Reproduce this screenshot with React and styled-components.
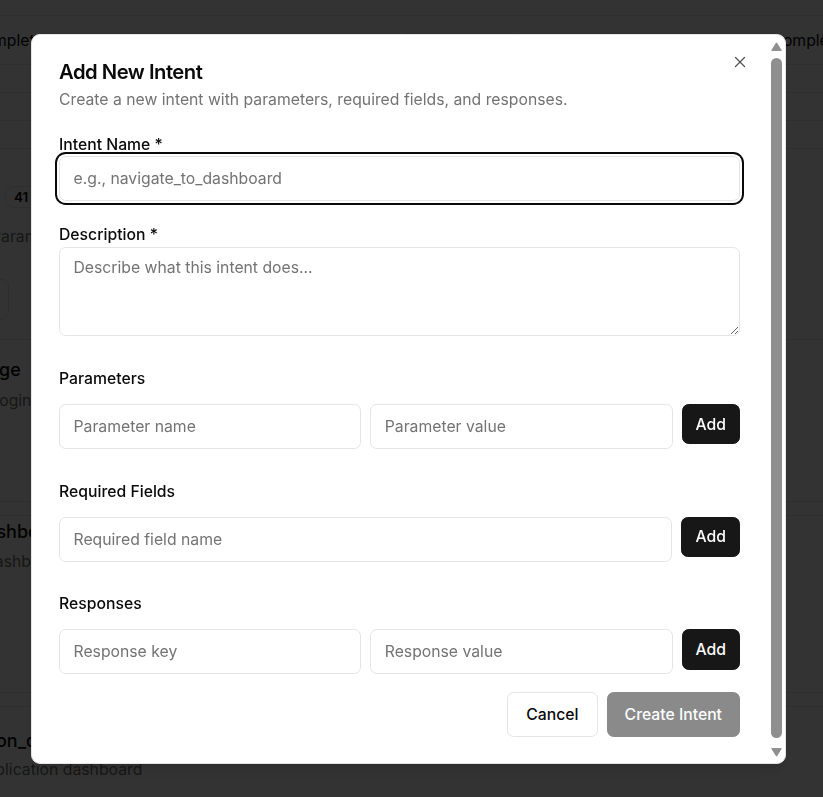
import React from "react";
import styled, { createGlobalStyle } from "styled-components";
import { X } from "lucide-react";

const Global = createGlobalStyle`
  *, *::before, *::after { box-sizing: border-box; }
  html, body { margin: 0; padding: 0; background: #fff; }
  body {
    font-family: Inter, "Noto Sans", sans-serif;
    color: #0a0a0a;
    overflow: hidden;
  }
`;

/* ---------- background page ---------- */
const Page = styled.div`
  width: 823px;
  height: 797px;
  overflow: hidden;
  background: #fff;
`;

const TopStrip = styled.div`
  height: 16px;
  border-bottom: 1px solid #e5e5e5;
`;

const HeadRow = styled.div`
  height: 49px;
  border-bottom: 1px solid #e5e5e5;
  display: flex;
  align-items: center;
  justify-content: space-between;
  margin: 0 -20px 0 -28px;
  font-size: 15.75px;
  white-space: nowrap;
  padding-top: 1px;
`;

const HeadMid = styled.span`
  color: #0a0a0a;
  letter-spacing: 6px;
`;

const ThinRow = styled.div`
  height: 28px;
  border-bottom: 1px solid #e5e5e5;
`;

const Summary = styled.div`
  height: 191px;
  border-bottom: 1px solid #e5e5e5;
  padding-top: 37px;
  display: flex;
  flex-direction: column;
  align-items: flex-start;
`;

const Pill = styled.span`
  margin-left: 4px;
  height: 22px;
  padding: 0 9px;
  border: 1px solid #e5e5e5;
  border-radius: 999px;
  font-size: 13.5px;
  font-weight: 600;
  line-height: 20px;
  white-space: nowrap;
`;

const MutedLine = styled.div`
  margin-top: 18px;
  margin-left: -9px;
  font-size: 15.75px;
  line-height: 22.5px;
  color: #737373;
  white-space: nowrap;
`;

const GhostBox = styled.div`
  margin-top: 30px;
  margin-left: -60px;
  width: 69px;
  height: 40px;
  border: 1px solid #e5e5e5;
  border-radius: 7px;
`;

const Item = styled.div`
  height: ${(p) => p.$h}px;
  padding-top: ${(p) => p.$pt}px;
  border-bottom: 1px solid #e5e5e5;
  margin-left: ${(p) => p.$shift}px;
  white-space: nowrap;
`;

const Spacer = styled.div`
  height: 14px;
  border-bottom: 1px solid #e5e5e5;
`;

const ItemTitle = styled.div`
  font-size: 18px;
  font-weight: 500;
  line-height: 27px;
`;

const ItemDesc = styled.div`
  margin-top: ${(p) => p.$mt}px;
  margin-left: ${(p) => p.$dx || 0}px;
  font-size: 15.75px;
  line-height: 22.5px;
  color: #737373;
`;

/* ---------- dialog ---------- */
const Overlay = styled.div`
  position: fixed;
  inset: 0;
  background: rgba(0, 0, 0, 0.8);
  display: flex;
  align-items: center;
  justify-content: center;
  padding-right: 6px;
`;

const Modal = styled.div`
  position: relative;
  width: 755px;
  height: 730px;
  background: #fff;
  border: 1px solid #e5e5e5;
  border-radius: 9px;
  box-shadow: 0 10px 15px -3px rgba(0, 0, 0, 0.1), 0 4px 6px -4px rgba(0, 0, 0, 0.1);
  overflow: hidden;
  display: flex;
`;

const Body = styled.div`
  flex: 1;
  min-width: 0;
  padding: 27px 30px 27px 27px;
`;

const Rail = styled.div`
  width: 15px;
  flex-shrink: 0;
  display: flex;
  flex-direction: column;
  padding: 7px 0 0 1px;
`;

const Arrow = styled.svg`
  display: block;
  width: 11px;
  height: 9px;
  margin-top: ${(p) => p.$mt}px;
  fill: #8f8f8f;
  stroke: #8f8f8f;
`;

const Thumb = styled.div`
  margin-top: 7px;
  width: 11px;
  height: 680px;
  border-radius: 6px;
  background: #8f8f8f;
`;

const CloseBtn = styled.button`
  position: absolute;
  top: 18px;
  right: 36px;
  width: 18px;
  height: 18px;
  padding: 0;
  border: 0;
  background: transparent;
  color: #0a0a0a;
  opacity: 0.7;
  display: flex;
  align-items: center;
  justify-content: center;
  cursor: pointer;
`;

const Title = styled.h2`
  margin: 0;
  font-size: 20.25px;
  font-weight: 600;
  line-height: 1;
  letter-spacing: -0.025em;
`;

const Subtitle = styled.p`
  margin: 6.75px 0 0;
  font-size: 15.75px;
  line-height: 22.5px;
  color: #737373;
`;

const Form = styled.form`
  margin-top: 26px;
`;

const Group = styled.div`
  margin-top: ${(p) => p.$mt || 0}px;
`;

const Label = styled.label`
  display: block;
  font-size: 15.75px;
  font-weight: 500;
  line-height: 16px;
  margin-bottom: ${(p) => p.$mb}px;
`;

const fieldBase = `
  display: block;
  width: 100%;
  border: 1px solid #e5e5e5;
  border-radius: 6.75px;
  background: #fff;
  font-family: Inter, "Noto Sans", sans-serif;
  font-size: 15.75px;
  color: #0a0a0a;
  outline: none;
  &::placeholder { color: #737373; opacity: 1; }
`;

const Input = styled.input`
  ${fieldBase}
  height: 45px;
  padding: 0 13.5px;
  flex: 1;
  min-width: 0;
  box-shadow: ${(p) => (p.$focused ? "0 0 0 2px #fff, 0 0 0 4px #0a0a0a" : "none")};
`;

const TextArea = styled.textarea`
  ${fieldBase}
  height: 89px;
  padding: 9px 13.5px;
  line-height: 22.5px;
`;

const Row = styled.div`
  display: flex;
  gap: 9px;
  align-items: flex-start;
`;

const Button = styled.button`
  flex-shrink: 0;
  height: ${(p) => (p.$tall ? 45 : 40.5)}px;
  padding: 0 ${(p) => p.$px}px;
  border-radius: 6.75px;
  font-family: Inter, "Noto Sans", sans-serif;
  font-size: 15.75px;
  font-weight: 500;
  border: 1px solid ${(p) => (p.$outline ? "#e5e5e5" : "#171717")};
  background: ${(p) => (p.$outline ? "#fff" : "#171717")};
  color: ${(p) => (p.$outline ? "#0a0a0a" : "#fafafa")};
  opacity: ${(p) => (p.disabled ? 0.5 : 1)};
  cursor: pointer;
`;

const Footer = styled.div`
  margin-top: 18px;
  display: flex;
  justify-content: flex-end;
  gap: 9px;
`;

function ScrollRail() {
  return (
    <Rail aria-hidden="true">
      <Arrow $mt={0} viewBox="0 0 11 9">
        <polygon points="5.5,0.8 10.3,8.4 0.7,8.4" strokeWidth="1" strokeLinejoin="round" />
      </Arrow>
      <Thumb />
      <Arrow $mt={10} viewBox="0 0 11 9">
        <polygon points="0.7,0.6 10.3,0.6 5.5,8.2" strokeWidth="1" strokeLinejoin="round" />
      </Arrow>
    </Rail>
  );
}

export default function App() {
  return (
    <>
      <Global />
      <Page>
        <TopStrip />
        <HeadRow>
          <span>Complete</span>
          <HeadMid>completed intents list</HeadMid>
          <span>Complete</span>
        </HeadRow>
        <ThinRow />
        <ThinRow />
        <ThinRow />
        <Summary>
          <Pill>41 intents</Pill>
          <MutedLine>Parameters</MutedLine>
          <GhostBox />
        </Summary>
        <Item $h={162} $pt={16} $shift={-181}>
          <ItemTitle>navigate_to_login_page</ItemTitle>
          <ItemDesc $mt={7} $dx={22}>Navigate to the user login page</ItemDesc>
        </Item>
        <Spacer />
        <Item $h={177} $pt={2} $shift={-132}>
          <ItemTitle>navigate_to_dashboard</ItemTitle>
          <ItemDesc $mt={6}>Navigate to the dashboard</ItemDesc>
        </Item>
        <Spacer />
        <Item $h={100} $pt={20} $shift={-143}>
          <ItemTitle>launch_application_dashboard</ItemTitle>
          <ItemDesc $mt={5} $dx={7}>Open the main application dashboard</ItemDesc>
        </Item>
      </Page>

      <Overlay>
        <Modal role="dialog">
          <Body>
            <Title>Add New Intent</Title>
            <Subtitle>Create a new intent with parameters, required fields, and responses.</Subtitle>
            <Form onSubmit={(e) => e.preventDefault()}>
              <Group>
                <Label $mb={3}>Intent Name *</Label>
                <Input $focused autoFocus placeholder="e.g., navigate_to_dashboard" />
              </Group>
              <Group $mt={26}>
                <Label $mb={4}>Description *</Label>
                <TextArea placeholder="Describe what this intent does..." />
              </Group>
              <Group $mt={34.75}>
                <Label $mb={17}>Parameters</Label>
                <Row>
                  <Input placeholder="Parameter name" />
                  <Input placeholder="Parameter value" />
                  <Button type="button" $px={13}>Add</Button>
                </Row>
              </Group>
              <Group $mt={34.75}>
                <Label $mb={17}>Required Fields</Label>
                <Row>
                  <Input placeholder="Required field name" />
                  <Button type="button" $px={13}>Add</Button>
                </Row>
              </Group>
              <Group $mt={34.75}>
                <Label $mb={17}>Responses</Label>
                <Row>
                  <Input placeholder="Response key" />
                  <Input placeholder="Response value" />
                  <Button type="button" $px={13}>Add</Button>
                </Row>
              </Group>
              <Footer>
                <Button type="button" $outline $tall $px={18}>Cancel</Button>
                <Button type="submit" $tall $px={17} disabled>Create Intent</Button>
              </Footer>
            </Form>
          </Body>
          <ScrollRail />
          <CloseBtn type="button" aria-label="Close">
            <X size={18} strokeWidth={1.6} />
          </CloseBtn>
        </Modal>
      </Overlay>
    </>
  );
}
